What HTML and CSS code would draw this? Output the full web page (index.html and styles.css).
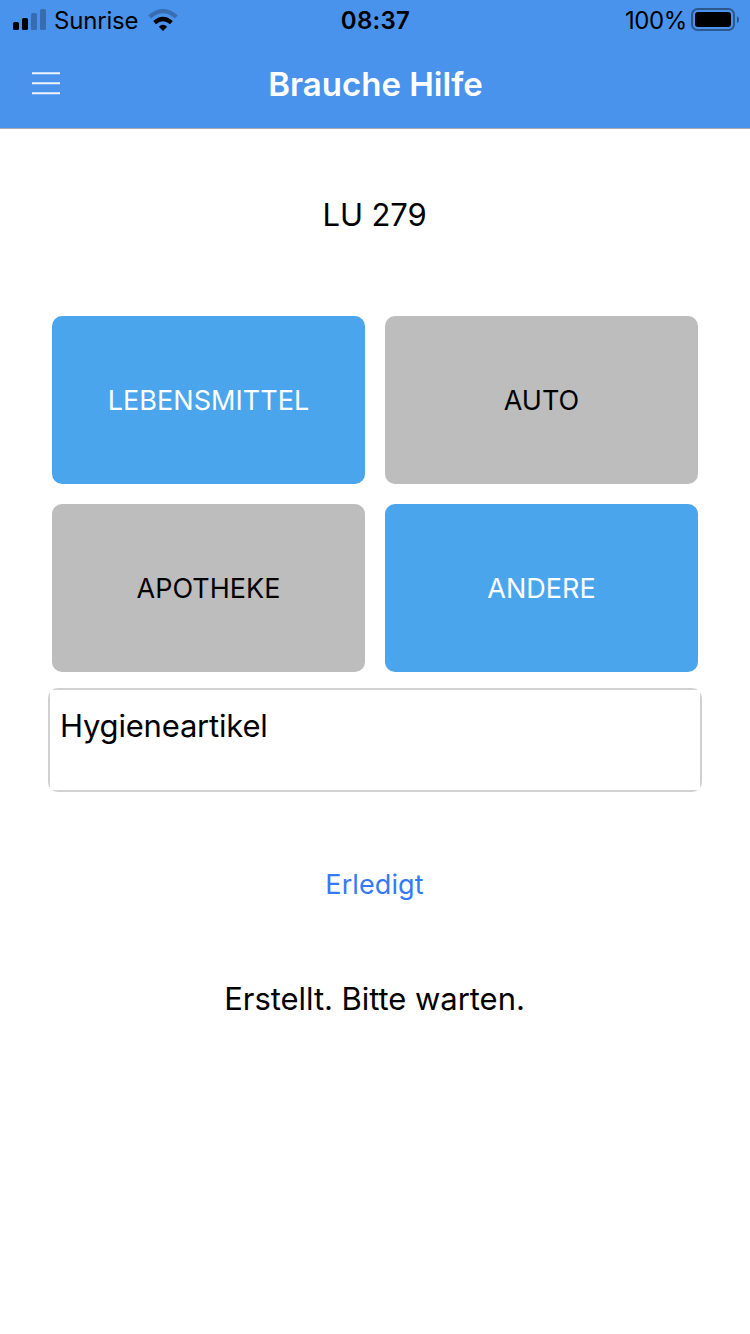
FILE: index.html
```html
<!DOCTYPE html>
<html lang="de">
<head>
<meta charset="utf-8">
<title>Brauche Hilfe</title>
<link rel="stylesheet" href="styles.css">
</head>
<body>
<header class="header">
  <div class="status">
    <div class="status-left">
      <svg class="signal" width="34" height="22" viewBox="0 0 34 22"><rect x="0" y="13" width="6" height="8" rx="1.6"/><rect x="9" y="9" width="6" height="12" rx="1.6"/><g opacity=".25"><rect x="18" y="4" width="6" height="17" rx="1.6"/><rect x="27" y="0" width="6" height="21" rx="1.6"/></g></svg>
      <span class="carrier">Sunrise</span>
      <svg class="wifi" width="30" height="22" viewBox="0 0 30 22"><path d="M15 22 L10.8 17.7 Q15 13.6 19.2 17.7 Z"/><path d="M6.6 13.7 Q15 6.3 23.4 13.7" fill="none" stroke="#000" stroke-width="4.2"/><path d="M1.6 7.9 Q15 -3.6 28.4 7.9" fill="none" stroke="#000" stroke-width="4.2" opacity=".25"/></svg>
    </div>
    <span class="time">08:37</span>
    <div class="status-right">
      <span class="percent">100%</span>
      <svg class="battery" width="49" height="24" viewBox="0 0 49 24"><rect x="1" y="1" width="42" height="21" rx="5.5" fill="none" stroke="#000" stroke-width="2" opacity=".4"/><rect x="4" y="4" width="36" height="15" rx="3"/><path d="M46 8 Q48 9 48 11.5 Q48 14 46 15 Z" opacity=".45"/></svg>
    </div>
  </div>
  <nav class="nav">
    <svg class="menu" width="28" height="24" viewBox="0 0 28 24"><path d="M0 1.3H28M0 11.3H28M0 21.3H28"/></svg>
    <h1 class="title">Brauche Hilfe</h1>
  </nav>
</header>
<main class="main">
  <p class="code">LU 279</p>
  <div class="grid">
    <button class="tile active">LEBENSMITTEL</button>
    <button class="tile">AUTO</button>
    <button class="tile">APOTHEKE</button>
    <button class="tile active">ANDERE</button>
  </div>
  <div class="field"><div class="note">Hygieneartikel</div></div>
  <button class="done">Erledigt</button>
  <p class="message">Erstellt. Bitte warten.</p>
</main>
</body>
</html>
```
FILE: styles.css
```css
* { box-sizing: border-box; margin: 0; padding: 0; }
body { width: 750px; height: 1334px; overflow: hidden; background: #fff; color: #000; font-family: Inter, "Liberation Sans", sans-serif; }
.header { height: 129px; background: #4a93ec; border-bottom: 1px solid #a9acb2; }
.status { display: grid; grid-template-columns: 1fr auto 1fr; height: 40px; padding: 0 10px 0 13px; font-size: 24px; line-height: 41px; }
.status-left, .status-right { display: flex; align-items: center; height: 40px; }
.status-right { justify-content: flex-end; }
.carrier { margin-left: 7px; letter-spacing: -0.2px; }
.wifi { margin-left: 10px; }
.time { margin: 0 1px 0 -1px; font-weight: 600; letter-spacing: 0.3px; }
.percent { margin-right: 4px; letter-spacing: -0.4px; }
.battery { margin-top: -1px; }
.nav { display: grid; grid-template-columns: 28px 1fr 28px; align-items: center; height: 88px; padding: 0 32px; }
.menu { fill: none; stroke: #fff; stroke-width: 2; opacity: .9; }
.title { padding-left: 1px; color: #fff; font-size: 33px; font-weight: 600; text-align: center; line-height: 40px; }
.main { display: flex; flex-direction: column; padding: 66px 48px 0; }
.code { height: 40px; padding-right: 1px; line-height: 40px; font-size: 31px; letter-spacing: -0.1px; text-align: center; }
.grid { display: grid; grid-template-columns: 313px 313px; grid-auto-rows: 168px; gap: 20px; margin: 81px 4px 16px; }
.tile { border: 0; border-radius: 10px; background: #bdbdbd; color: #000; font: 27px Inter, sans-serif; letter-spacing: 0.03px; }
.active { background: #4ba5ed; color: #fff; }
.field { height: 104px; border-radius: 10px; overflow: hidden; }
.note { height: 104px; border: 2px solid #d1d1d1; padding: 16px 10px; font-size: 31px; line-height: 40px; letter-spacing: -0.2px; }
.done { align-self: center; height: 40px; margin-top: 73px; padding-right: 1px; border: 0; background: none; color: #347af6; font: 27px/40px Inter, sans-serif; letter-spacing: 0.1px; }
.message { height: 40px; margin-top: 74px; padding-right: 1px; font-size: 31px; line-height: 40px; letter-spacing: -0.05px; text-align: center; }
```
